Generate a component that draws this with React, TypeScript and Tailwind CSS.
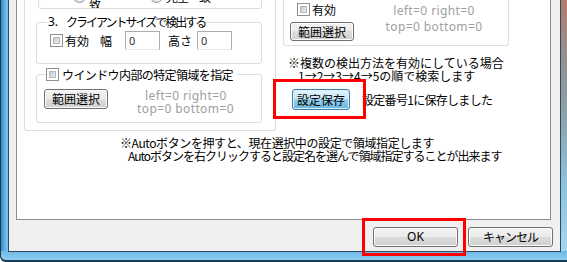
import React from "react";

const Check = () => (
  <div className="w-[13px] h-[13px] shrink-0 border border-[#8e8f8f] bg-white p-[2px]">
    <div className="w-full h-full border border-[#b4b9c0] bg-[linear-gradient(135deg,#c3c8ce,#f0f1f3)]" />
  </div>
);

const Radio = () => (
  <div className="w-[13px] h-[13px] shrink-0 rounded-full border border-[#8e8f8f] bg-[linear-gradient(135deg,#c9cdd3,#f4f5f6)]" />
);

const Btn = ({ children, className = "" }: { children: React.ReactNode; className?: string }) => (
  <div
    className={
      "flex items-center justify-center shrink-0 rounded-[3px] border border-[#707070] bg-[linear-gradient(#f2f2f2_0%,#ebebeb_50%,#dddddd_50%,#cfcfcf_100%)] shadow-[inset_0_0_0_1px_#fcfcfc] leading-[12px] " +
      className
    }
  >
    {children}
  </div>
);

const HotBtn = ({ children, className = "" }: { children: React.ReactNode; className?: string }) => (
  <div
    className={
      "flex items-center justify-center shrink-0 rounded-[3px] border border-[#3c7fb1] bg-[linear-gradient(#e5f4fc_0%,#c4e5f6_50%,#98d1ef_50%,#68b3db_100%)] shadow-[inset_0_0_0_1px_#d8effa] leading-[12px] " +
      className
    }
  >
    {children}
  </div>
);

const Input = () => (
  <div className="w-[35px] h-[19px] shrink-0 border border-[#abadb3] border-b-[#e3e9ef] bg-white pl-[3px] flex items-center text-[#333] [font-family:'Noto_Sans',sans-serif] text-[11px]">
    0
  </div>
);

export default function App() {
  return (
    <div className="relative w-[567px] h-[262px] overflow-hidden flex flex-col rounded-bl-[6px] bg-[#1c3a52] [font-family:'Noto_Sans_CJK_JP',sans-serif] text-[12px] leading-[13px] text-black">
      <div className="flex h-[251px] shrink-0">
        <div className="w-[8px] border-l border-[#1c3a52] bg-[linear-gradient(90deg,#3588c8,#5caee2_50%,#7cc4ec)]" />
        <div className="w-[553px] flex flex-col border-x border-[#2b4a63] bg-[#f0f0f0]">
          <div className="flex h-[220px] pl-[7px] pr-[9px]">
            <div className="w-[535px] h-[220px] border-x border-b border-[#898c95] bg-white flex flex-col">
              <div className="flex items-start">
                {/* left outer box */}
                <div className="ml-[7px] w-[252px] h-[131px] border-x border-b border-[#d5dfe5] rounded-b-[3px] pl-[11px] pr-[13px] flex flex-col">
                  <div className="ml-[2px] h-[9px] border-x border-b border-[#d5dfe5] rounded-b-[3px] overflow-hidden">
                    <div className="-mt-[10px] h-[13px] flex items-center pl-[34px]">
                      <div className="w-[77px] flex items-center">
                        <Radio />
                        <span className="ml-[3px] tracking-[-1px]">ピクセル一致</span>
                      </div>
                      <div className="flex items-center">
                        <Radio />
                        <span className="ml-[3px] tracking-[-1px]">完全一致</span>
                      </div>
                    </div>
                  </div>
                  <fieldset className="mt-[7px] h-[48px] border border-[#d5dfe5] rounded-[3px]">
                    <legend className="ml-[10px] px-[1px] leading-[12px]">
                      <div className="flex items-center">
                        <span className="[font-family:'Noto_Sans',sans-serif]">3.</span>
                        <span className="ml-[8px] tracking-[-2px]">クライアントサイズで検出する</span>
                      </div>
                    </legend>
                    <div className="mt-[3px] pl-[13px] h-[19px] flex items-center">
                      <Check />
                      <span className="ml-[2px]">有効</span>
                      <span className="ml-[11px]">幅</span>
                      <div className="ml-[13px]">
                        <Input />
                      </div>
                      <span className="ml-[8px]">高さ</span>
                      <div className="ml-[5px]">
                        <Input />
                      </div>
                    </div>
                  </fieldset>
                  <fieldset className="mt-[4px] h-[55px] border border-[#d5dfe5] rounded-[3px]">
                    <legend className="ml-[9px] pr-[4px]">
                      <div className="flex items-center h-[13px]">
                        <Check />
                        <span className="ml-[3px] leading-[12px] tracking-[-0.6px]">ウインドウ内部の特定領域を指定</span>
                      </div>
                    </legend>
                    <div className="mt-[8px] pl-[7px] flex items-start">
                      <Btn className="w-[64px] h-[20px]">範囲選択</Btn>
                      <div className="ml-[29px] text-[#a0a0a0] leading-[13px] [font-family:'Noto_Sans',sans-serif] text-[12px] tracking-[0.4px] whitespace-nowrap">
                        <div className="pl-[8px]">left=0 right=0</div>
                        <div>top=0 bottom=0</div>
                      </div>
                    </div>
                  </fieldset>
                </div>
                {/* right column */}
                <div className="ml-[7px] w-[226px] flex flex-col">
                  <div className="h-[46px] border-x border-b border-[#d5dfe5] rounded-b-[3px] flex">
                    <div className="flex flex-col pt-[3px]">
                      <div className="h-[13px] pl-[13px] flex items-center">
                        <Check />
                        <span className="ml-[2px]">有効</span>
                      </div>
                      <Btn className="mt-[6px] ml-[6px] w-[64px] h-[19px]">範囲選択</Btn>
                    </div>
                    <div className="flex-1 pt-[3px] pl-[6px] text-center text-[#a0a0a0] leading-[16px] [font-family:'Noto_Sans',sans-serif] text-[12px] tracking-[0.4px]">
                      <div>left=0 right=0</div>
                      <div>top=0 bottom=0</div>
                    </div>
                  </div>
                  <div className="mt-[10px] ml-[5px] whitespace-nowrap">※複数の検出方法を有効にしている場合</div>
                  <div className="ml-[15px] whitespace-nowrap">1→2→3→4→5の順で検索します</div>
                  <div className="mt-[7px] ml-[9px] flex items-center">
                    <HotBtn className="w-[58px] h-[21px]">設定保存</HotBtn>
                    <span className="ml-[12px] tracking-[-0.7px] whitespace-nowrap">設定番号1に保存しました</span>
                  </div>
                </div>
              </div>
              <div className="mt-[5px] pl-[103px] whitespace-nowrap">
                <div className="tracking-[-0.4px]">※Autoボタンを押すと、現在選択中の設定で領域指定します</div>
                <div className="ml-[8px] tracking-[-1px]">Autoボタンを右クリックすると設定名を選んで領域指定することが出来ます</div>
              </div>
            </div>
          </div>
          <div className="flex justify-end gap-[10px] pt-[7px] pr-[7px]">
            <Btn className="w-[85px] h-[20px] [font-family:'Noto_Sans',sans-serif]">OK</Btn>
            <Btn className="w-[85px] h-[20px] tracking-[-1px]">キャンセル</Btn>
          </div>
        </div>
        <div className="w-[6px] bg-[linear-gradient(180deg,#b47a6b,#9a8e8a_20%,#8d9ca0_40%,#8fc2de_75%,#a6d6ee)]" />
      </div>
      <div className="h-[11px] border-l border-b-2 border-[#1c3a52] rounded-bl-[6px] bg-[linear-gradient(180deg,#6db8e6,#8ccdf0)]">
        <div className="ml-[7px] mr-[6px] border-t border-[#2b4a63]" />
      </div>
      <div className="absolute left-[273px] top-[79px] w-[93px] h-[40px] border-[3px] border-[#ff0000]" />
      <div className="absolute left-[362px] top-[218px] w-[104px] h-[38px] border-[3px] border-[#ff0000]" />
    </div>
  );
}
